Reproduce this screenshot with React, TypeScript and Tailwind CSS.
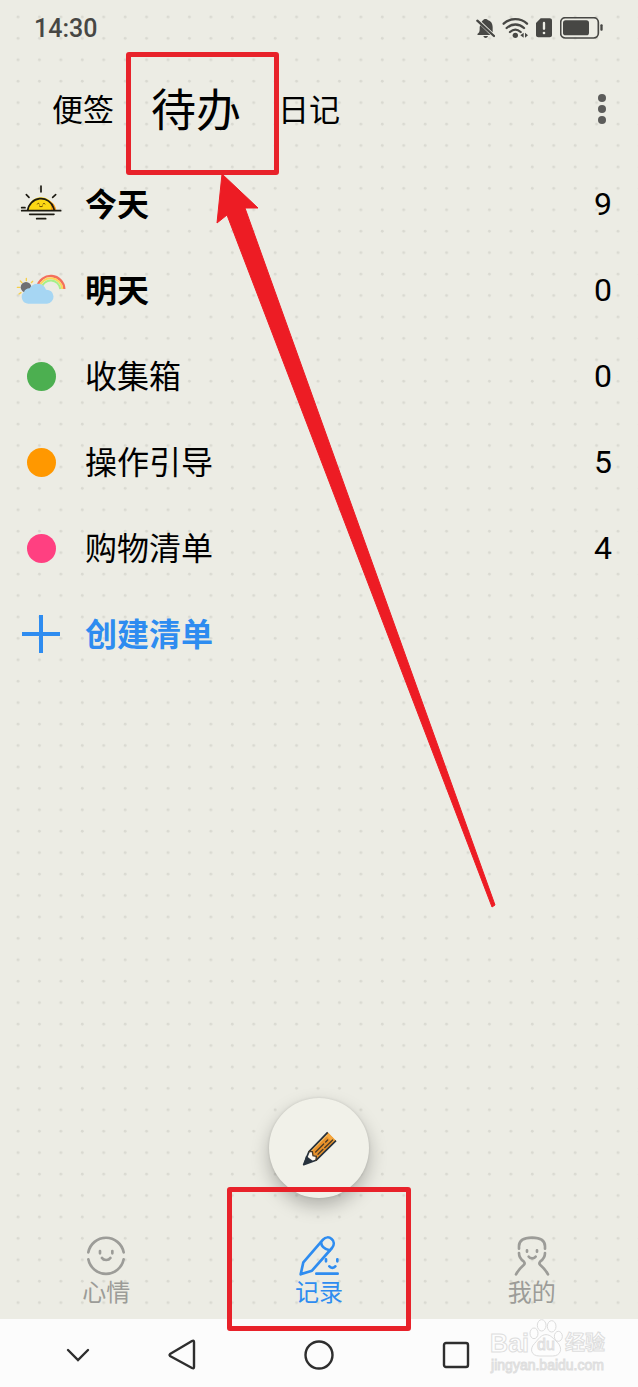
import type { ReactNode } from "react";

const DotPaper = () => {
  const step = 150 / 7;

  return (
    <svg className="pointer-events-none absolute inset-0 h-full w-full" aria-hidden="true">
      <defs>
        <pattern id="dots" x="7" y="6" width={step} height={step} patternUnits="userSpaceOnUse">
          <circle cx="11" cy="11" r="1.4" fill="#d9d9d1" />
        </pattern>
      </defs>
      <rect width="100%" height="100%" fill="url(#dots)" />
    </svg>
  );
};

const StatusIcons = () => (
  <div className="flex items-center text-[#474744]">
    {/* Muted bell */}
    <svg className="mr-[7px] h-5 w-[19px]" viewBox="0 0 57 60" fill="currentColor">
      <path d="M22 6c2-4 11-4 13 0 10 3 15 11 15 21v16L17 11c1-2 3-4 5-5zM4 48c6-3 7-8 7-15 0-5 0-8 2-11l30 29H5zM22 54h14c-2 8-12 8-14 0z" />
      <path d="M4 8l50 46" stroke="currentColor" strokeWidth="7" strokeLinecap="round" />
    </svg>
    {/* Wifi */}
    <svg className="mr-[7px] h-5 w-[27px]" viewBox="0 0 81 60" fill="none">
      <path d="M5 17C24-1 56-1 75 17M14 30c15-14 37-14 52 0M24 42c10-9 22-9 32 0" stroke="currentColor" strokeWidth="7" strokeLinecap="round" />
      <circle cx="40" cy="52" r="8" fill="currentColor" />
      <path d="M65 44v15l-10-7zM69 44v15l9-7z" fill="currentColor" />
    </svg>
    {/* Sim card */}
    <svg className="mr-2 h-5 w-4" viewBox="0 0 48 60">
      <path d="M14 1h27c4 0 7 2 7 6v45c0 4-3 6-7 6H7c-4 0-7-2-7-6V15z" fill="currentColor" />
      <path d="M24 15v17" stroke="#ecece4" strokeWidth="7" strokeLinecap="round" />
      <circle cx="24" cy="45" r="4" fill="#ecece4" />
    </svg>
    {/* Battery */}
    <svg className="h-[22px] w-11" viewBox="0 0 132 66" fill="none">
      <rect x="2" y="2" width="113" height="61" rx="14" stroke="currentColor" strokeWidth="5" />
      <rect x="9" y="10" width="78" height="45" rx="8" fill="currentColor" />
      <rect x="121" y="22" width="7" height="19" rx="3" fill="currentColor" />
    </svg>
  </div>
);

const SunriseIcon = () => (
  <svg className="h-10 w-[50px]" viewBox="0 0 150 120" fill="none">
    <path d="M35 80a40 40 0 0 1 80 0z" fill="#fcd814" />
    <path d="M98 48c14 8 22 18 23 32h-16c1-12-1-22-7-32z" fill="#f9a01b" />
    <path d="M35 80a40 40 0 0 1 78-8l2 8" stroke="#1c1a12" strokeWidth="5" />
    <g stroke="#1c1a12" strokeWidth="5" strokeLinecap="round">
      <path d="M75 6v18M31 32l8 8M119 32l-9 8M17 80h117M17 71h10M41 91h73M62 104h27" />
    </g>
    <path d="M64 60c1-3 5-3 6 0M81 60c1-3 5-3 6 0M70 66c3 3 7 3 10 0" stroke="#6b4a08" strokeWidth="3" strokeLinecap="round" />
  </svg>
);

const RainbowIcon = () => (
  <svg className="h-10 w-[50px]" viewBox="0 0 150 120" fill="none">
    <path d="M64 50a41 41 0 0 1 81 7" stroke="#f4705c" strokeWidth="7" />
    <path d="M70 52a35 35 0 0 1 69 5" stroke="#fcd75a" strokeWidth="6" />
    <path d="M76 54a29 29 0 0 1 57 3" stroke="#a5f08a" strokeWidth="6" />
    <path d="M31 25v7M13 33l5 5M4 52h7M9 72l6-4M50 34l-4 4" stroke="#f5cf4a" strokeWidth="4" strokeLinecap="round" />
    <circle cx="30" cy="52" r="16" fill="#6f6f73" />
    <path d="M37 101a20 20 0 0 1-13-35 18 18 0 0 1 17-11 27 27 0 0 1 49 4 21 21 0 0 1 3 42z" fill="#a6d6f3" />
  </svg>
);

const PencilIcon = () => (
  <svg className="h-[35px] w-[35px]" viewBox="0 0 105 105" fill="none">
    <path d="M21 62L77 4l25 25-60 58z" fill="#e8912a" />
    <path d="M69 12l8-8 25 25-8 7z" fill="#f5a63c" />
    <path d="M25 61l50-49" stroke="#f7bd62" strokeWidth="5" />
    <path d="M21 62l9-1 3 12 9 1v13l-24 9-10-10z" fill="#fdf8ee" />
    <path d="M12 74l22 17-29 10z" fill="#27323d" />
    <path d="M77 4L21 62 5 101l37-13 60-59" stroke="#27323d" strokeWidth="5" strokeLinejoin="round" />
    <path d="M21 62h10l2 12 10 2-1 12M41 63l24-24M71 33l6-6M48 70l15-15M68 50l24-23" stroke="#4b3a24" strokeWidth="4" strokeLinecap="round" />
  </svg>
);

const MoodIcon = () => (
  <svg className="h-10 w-10" viewBox="0 0 120 120" fill="none" stroke="currentColor" strokeWidth="8" strokeLinecap="round">
    <path d="M7 49a54 54 0 0 1 106 0M7 70a54 54 0 0 0 106 0M42 45v7M79 45v7M48 66c5 8 20 8 25 0" />
  </svg>
);

const RecordIcon = () => (
  <svg className="h-10 w-10" viewBox="0 0 120 120" fill="none" stroke="currentColor" strokeWidth="8" strokeLinecap="round" strokeLinejoin="round">
    <path d="M13 79L72 11c8-9 19-8 26-2s9 17 1 27L39 104 5 115z" />
    <path d="M66 19c1 11 11 20 26 24" />
    <path d="M52 113h64M81 70v6M115 70v6M91 91c4 6 14 6 18 0" />
  </svg>
);

const ProfileIcon = () => (
  <svg className="h-10 w-10" viewBox="0 0 120 120" fill="none" stroke="currentColor" strokeWidth="8" strokeLinecap="round">
    <path d="M21 38v-7C21 13 36 5 60 5s39 8 39 26v7" />
    <path d="M21 51c0 12 5 19 14 25 4 4 3 8 0 11-9 8-17 17-23 28" />
    <path d="M99 51c0 12-5 19-14 25-4 4-3 8 0 11 9 8 17 17 23 28" />
    <path d="M45 43v4M75 43v4M50 62c4 7 17 7 21 0" />
  </svg>
);

const Dot = ({ className }: { className: string }) => (
  <span className={`block size-[29px] rounded-full ${className}`} />
);

type Row = { label: string; count: number; icon: ReactNode; bold?: boolean };

const rows: Row[] = [
  { label: "今天", count: 9, icon: <SunriseIcon />, bold: true },
  { label: "明天", count: 0, icon: <RainbowIcon />, bold: true },
  { label: "收集箱", count: 0, icon: <Dot className="bg-[#4caf50]" /> },
  { label: "操作引导", count: 5, icon: <Dot className="bg-[#ff9800]" /> },
  { label: "购物清单", count: 4, icon: <Dot className="bg-[#ff4081]" /> },
];

const Highlight = ({ className }: { className: string }) => (
  <span className={`pointer-events-none absolute z-10 rounded-[3px] border-5 border-[#e8222a] ${className}`} />
);

const Arrow = () => (
  <svg className="pointer-events-none absolute left-[214px] top-[173px] z-10 h-[736px] w-[284px]" viewBox="214 173 284 736">
    <path d="M222 174L258 208H245L495 905L492 907L227 215L217 223Z" fill="#ed1c24" stroke="#ed1c24" strokeLinejoin="round" />
  </svg>
);

const Watermark = () => (
  <div className="pointer-events-none absolute right-[33px] bottom-[14px] flex flex-col items-center text-[#fdfdfd] font-['Liberation_Sans','Noto_Sans_CJK_SC',sans-serif] [-webkit-text-stroke:1px_#dedede]">
    <div className="flex items-end">
      <span className="text-[25px] leading-7 font-bold">Bai</span>
      <span className="relative flex h-[38px] w-[34px] items-end justify-center">
        <svg className="absolute inset-0 h-full w-full" viewBox="0 0 102 114" fill="#fdfdfd" stroke="#dcdcdc" strokeWidth="3">
          <ellipse cx="15" cy="43" rx="12" ry="16" />
          <ellipse cx="38" cy="19" rx="13" ry="17" />
          <ellipse cx="68" cy="22" rx="13" ry="17" />
          <ellipse cx="88" cy="52" rx="12" ry="15" />
          <path d="M51 47c14 0 22 12 34 23 18 18 10 41-14 41H31c-24 0-31-21-14-38 12-13 19-26 34-26z" />
        </svg>
        <span className="relative text-base leading-6">du</span>
      </span>
      <span className="pl-0.5 text-xl leading-7 font-bold">经验</span>
    </div>
    <span className="text-sm leading-4">jingyan.baidu.com</span>
  </div>
);

const SystemBar = () => (
  <div className="relative flex h-[68px] items-center bg-[#fcfcfc] pt-1 text-[#2e2e2e]">
    <div className="flex flex-1 justify-end pr-6">
      <button aria-label="收起" className="block">
        <svg className="h-4 w-6" viewBox="0 0 24 16" fill="none" stroke="currentColor" strokeWidth="2.4" strokeLinecap="round">
          <path d="M2 3l10 10L22 3" />
        </svg>
      </button>
    </div>
    <button aria-label="返回" className="flex w-[137px] justify-center">
      <svg className="size-8" viewBox="0 0 32 32" fill="none" stroke="currentColor" strokeWidth="2.4" strokeLinejoin="round">
        <path d="M4 15Q3 16 4 17L26 29Q28 30 28 28V3Q28 1 26 2Z" />
      </svg>
    </button>
    <button aria-label="主页" className="flex w-[137px] justify-center">
      <svg className="size-8" viewBox="0 0 32 32" fill="none" stroke="currentColor" strokeWidth="2.4">
        <circle cx="16" cy="16" r="13.5" />
      </svg>
    </button>
    <button aria-label="多任务" className="flex w-[137px] justify-center">
      <svg className="size-8" viewBox="0 0 32 32" fill="none" stroke="currentColor" strokeWidth="2.4">
        <rect x="4" y="4" width="24" height="24" rx="2" />
      </svg>
    </button>
    <div className="flex-1 pr-6" />
    <Watermark />
  </div>
);

const App = () => {
  return (
    <div className="relative flex min-h-screen flex-col bg-[#ecece4] font-['Noto_Sans_CJK_SC',sans-serif] text-black">
      <DotPaper />

      {/* Status bar */}
      <div className="relative flex h-14 items-center justify-between px-[34px]">
        <span className="pt-0.5 font-['Roboto',sans-serif] text-[25px] leading-8 font-medium text-[#474744]">14:30</span>
        <StatusIcons />
      </div>

      {/* Tabs */}
      <header className="relative flex h-[105px] items-center justify-between pr-5 pl-[52px]">
        <nav className="flex items-center gap-[37px] pb-0.5 text-[31px] leading-12">
          <button>便签</button>
          <button className="relative text-[45px]">
            待办
            <Highlight className="-top-8 -left-[25px] h-[123px] w-[153px]" />
          </button>
          <button>日记</button>
        </nav>
        <button aria-label="更多" className="flex w-8 flex-col items-center gap-[3px]">
          <span className="size-2 rounded-full bg-[#5c5c5a]" />
          <span className="size-2 rounded-full bg-[#5c5c5a]" />
          <span className="size-2 rounded-full bg-[#5c5c5a]" />
        </button>
      </header>

      {/* Lists */}
      <main className="relative flex-1 text-[32px] leading-12">
        {rows.map((row) => (
          <button key={row.label} className="flex h-[86px] w-full items-center pr-[26px] pl-4">
            <span className="mr-[19px] flex w-[50px] justify-center">{row.icon}</span>
            <span className={row.bold ? "pb-1 font-bold" : "pb-1"}>{row.label}</span>
            <span className="ml-auto font-['Roboto',sans-serif]">{row.count}</span>
          </button>
        ))}
        <button className="flex h-[86px] w-full items-center pr-[26px] pl-4 font-bold text-[#2e8cf0]">
          <span className="mr-[19px] flex w-[50px] justify-center">
            <svg className="size-[38px]" viewBox="0 0 38 38" stroke="currentColor" strokeWidth="4">
              <path d="M19 0v38M0 19h38" />
            </svg>
          </span>
          <span className="pb-1">创建清单</span>
        </button>
      </main>

      <button
        aria-label="新建"
        className="relative mb-[22px] flex size-[100px] items-center justify-center self-center rounded-full bg-[#f1f1e9] shadow-[0_8px_18px_rgba(0,0,0,0.25),0_0_3px_rgba(0,0,0,0.12)]"
      >
        <PencilIcon />
      </button>

      {/* Bottom nav */}
      <nav className="relative z-10 grid h-[99px] grid-cols-3 text-2xl leading-6 text-[#9c9c98]">
        <button className="flex flex-col items-center gap-[3px] pt-4">
          <MoodIcon />
          心情
        </button>
        <button className="relative flex flex-col items-center gap-[3px] pt-4 text-[#2e8cf0]">
          <RecordIcon />
          记录
          <Highlight className="inset-x-[14px] -top-[33px] h-[144px]" />
        </button>
        <button className="flex flex-col items-center gap-[3px] pt-4">
          <ProfileIcon />
          我的
        </button>
      </nav>

      <SystemBar />
      <Arrow />
    </div>
  );
};

export default App;
